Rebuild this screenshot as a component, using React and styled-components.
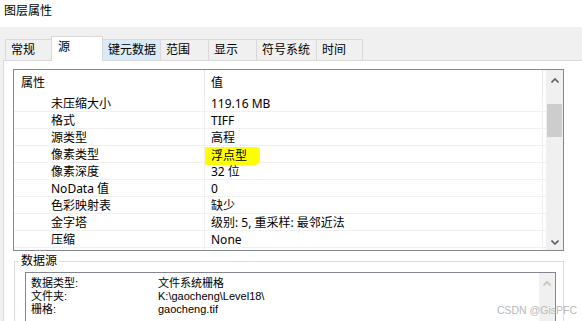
import styled, { createGlobalStyle } from "styled-components";

const GlobalStyle = createGlobalStyle`
  html, body {
    margin: 0;
    padding: 0;
    background: #f0f0f0;
  }
  * {
    box-sizing: border-box;
  }
`;

const Window = styled.div`
  position: relative;
  width: 582px;
  height: 321px;
  overflow: hidden;
  background: #f0f0f0;
  font-family: "Noto Sans", "Noto Sans CJK SC", sans-serif;
  font-size: 12px;
  color: #000;
`;

const TitleBar = styled.div`
  height: 27px;
  background: #fff;
  padding: 3px 0 0 4px;
  line-height: 16px;
`;

const TabStrip = styled.div`
  display: flex;
  align-items: flex-end;
  height: 24px;
  margin-top: 9px;
  padding-left: 5px;
`;

const Tab = styled.div`
  position: relative;
  width: ${(p) => p.$w}px;
  height: ${(p) => (p.$active ? 25 : 21)}px;
  margin-left: -1px;
  margin-bottom: ${(p) => (p.$active ? -1 : 0)}px;
  z-index: ${(p) => (p.$active ? 1 : 0)};
  border: 1px solid #d9d9d9;
  border-bottom: none;
  background: ${(p) => (p.$active ? "#fff" : p.$hover ? "#d9ebf9" : "#f0f0f0")};
  padding: ${(p) => (p.$active ? "2px 0 0 6px" : "2px 0 0 5px")};
  line-height: 16px;
  white-space: nowrap;

  &:first-child {
    margin-left: 0;
  }
`;

const Page = styled.div`
  margin-left: 3px;
  height: 261px;
  background: #fff;
  border-top: 1px solid #d9d9d9;
  border-left: 1px solid #d9d9d9;
  padding: 8px 0 0 9px;
`;

const ListView = styled.div`
  display: flex;
  width: 551px;
  height: 182px;
  border: 1px solid #828790;
`;

const Table = styled.div`
  flex: 1;
  overflow: hidden;
`;

const HeaderRow = styled.div`
  display: grid;
  grid-template-columns: 191px 338px;
  height: 25px;
`;

const HeadCell = styled.div`
  padding: 5px 0 0 ${(p) => p.$pad}px;
  line-height: 16px;
  border-right: 1px solid #e5e5e5;
`;

const Row = styled.div`
  display: grid;
  grid-template-columns: 191px 338px;
  height: 17px;
  border-bottom: 1px solid #f0f0f0;
`;

const Cell = styled.div`
  padding: 1px 0 0 ${(p) => p.$pad}px;
  line-height: 16px;
  border-right: 1px solid #f0f0f0;
  white-space: nowrap;
`;

const Marked = styled.span`
  position: relative;
  z-index: 1;
  display: inline-block;
  background: #ffff00;
  margin: 0 0 0 -6px;
  padding: 1px 13px 2px 6px;
  line-height: 15px;
  border-radius: 0 3px 5px 0;
`;

const ScrollBar = styled.div`
  width: ${(p) => p.$w}px;
  background: #f0f0f0;
  display: flex;
  flex-direction: column;
  align-items: center;
`;

const Arrow = styled.div`
  height: ${(p) => p.$h}px;
  width: 100%;
  display: flex;
  align-items: ${(p) => (p.$end ? "flex-end" : "center")};
  justify-content: center;
  padding-bottom: ${(p) => (p.$end ? 5 : 0)}px;
`;

const Track = styled.div`
  flex: 1;
  width: 100%;
  padding: 14px 1px 0 1px;
`;

const Thumb = styled.div`
  height: 33px;
  background: #cdcdcd;
`;

const GroupBox = styled.fieldset`
  margin: 3px 0 0 1px;
  width: 550px;
  height: 80px;
  border: 1px solid #dcdcdc;
  padding: 4px 7px 0 10px;
`;

const Legend = styled.legend`
  margin-left: -6px;
  padding: 0 2px;
  line-height: 14px;
`;

const TextBox = styled.div`
  display: flex;
  height: 60px;
  border: 1px solid #828790;
  border-bottom: none;
`;

const InfoList = styled.div`
  flex: 1;
  padding: 4px 0 0 5px;
`;

const InfoRow = styled.div`
  display: grid;
  grid-template-columns: 127px 1fr;
  height: 12.8px;
  font-family: "Liberation Sans", "Noto Sans CJK SC", sans-serif;
  font-size: 11px;
  line-height: 12.8px;
  white-space: nowrap;
`;

const Watermark = styled.div`
  position: absolute;
  right: 5px;
  bottom: 5px;
  font-family: "Liberation Sans", Arial, sans-serif;
  font-size: 10.5px;
  color: #b9b9b9;
`;

function Chevron({ up, color }) {
  return (
    <svg width="8" height="5" viewBox="0 0 8 5">
      <polyline
        points={up ? "0.5,4.5 4,1 7.5,4.5" : "0.5,0.5 4,4 7.5,0.5"}
        fill="none"
        stroke={color}
        strokeWidth="1.6"
      />
    </svg>
  );
}

const tabs = [
  { label: "常规", w: 47 },
  { label: "源", w: 52, active: true },
  { label: "键元数据", w: 59, hover: true },
  { label: "范围", w: 49 },
  { label: "显示", w: 49 },
  { label: "符号系统", w: 61 },
  { label: "时间", w: 47 },
];

const props = [
  ["未压缩大小", "119.16 MB"],
  ["格式", "TIFF"],
  ["源类型", "高程"],
  ["像素类型", "浮点型", true],
  ["像素深度", "32 位"],
  ["NoData 值", "0"],
  ["色彩映射表", "缺少"],
  ["金字塔", "级别: 5, 重采样: 最邻近法"],
  ["压缩", "None"],
  ["", ""],
];

const info = [
  ["数据类型:", "文件系统栅格"],
  ["文件夹:", "K:\\gaocheng\\Level18\\"],
  ["栅格:", "gaocheng.tif"],
];

export default function App() {
  return (
    <Window>
      <GlobalStyle />
      <TitleBar>图层属性</TitleBar>
      <TabStrip>
        {tabs.map((t) => (
          <Tab key={t.label} $w={t.w} $active={t.active} $hover={t.hover}>
            {t.label}
          </Tab>
        ))}
      </TabStrip>
      <Page>
        <ListView>
          <Table>
            <HeaderRow>
              <HeadCell $pad={7}>属性</HeadCell>
              <HeadCell $pad={6}>值</HeadCell>
            </HeaderRow>
            {props.map(([k, v, mark], i) => (
              <Row key={i}>
                <Cell $pad={37}>{k}</Cell>
                <Cell $pad={6}>{mark ? <Marked>{v}</Marked> : v}</Cell>
              </Row>
            ))}
          </Table>
          <ScrollBar $w={17}>
            <Arrow $h={20}>
              <Chevron up color="#606060" />
            </Arrow>
            <Track>
              <Thumb />
            </Track>
            <Arrow $h={17} $end>
              <Chevron color="#606060" />
            </Arrow>
          </ScrollBar>
        </ListView>
        <GroupBox>
          <Legend>数据源</Legend>
          <TextBox>
            <InfoList>
              {info.map(([k, v]) => (
                <InfoRow key={k}>
                  <span>{k}</span>
                  <span>{v}</span>
                </InfoRow>
              ))}
            </InfoList>
            <ScrollBar $w={16}>
              <Arrow $h={20}>
                <Chevron up color="#c0c0c0" />
              </Arrow>
            </ScrollBar>
          </TextBox>
        </GroupBox>
      </Page>
      <Watermark>CSDN @GisPFC</Watermark>
    </Window>
  );
}
